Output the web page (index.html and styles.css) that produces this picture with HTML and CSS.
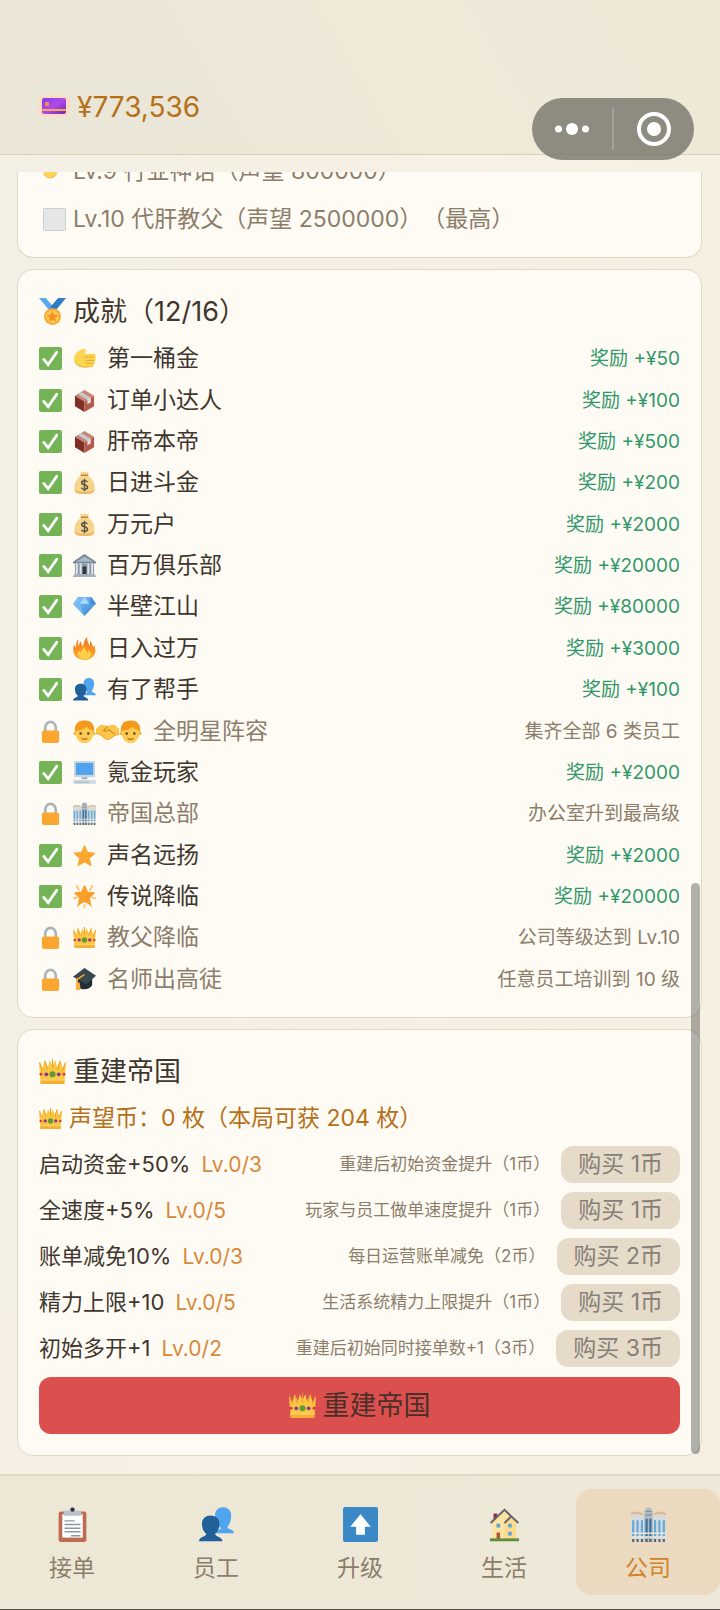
FILE: index.html
```html
<!DOCTYPE html>
<html lang="zh-CN">
<head>
    <meta charset="UTF-8">
    <meta name="viewport" content="width=device-width, initial-scale=1">
    <title>公司</title>
    <link rel="stylesheet" href="styles.css">
</head>
<body>

<!-- 图标 -->
<svg class="sprite" aria-hidden="true">
    <defs>
        <linearGradient id="g-card" x1="0" y1="0" x2="1" y2="1">
            <stop offset="0" stop-color="#7b3fe4"/>
            <stop offset=".5" stop-color="#b14be8"/>
            <stop offset="1" stop-color="#6a2bb5"/>
        </linearGradient>
        <linearGradient id="g-gem" x1="0" y1="0" x2="1" y2="1">
            <stop offset="0" stop-color="#8fcbfa"/>
            <stop offset="1" stop-color="#2f7fd0"/>
        </linearGradient>
        <linearGradient id="g-fire" x1="0" y1="0" x2="0" y2="1">
            <stop offset="0" stop-color="#f2711c"/>
            <stop offset="1" stop-color="#fdb12f"/>
        </linearGradient>
    </defs>
    <symbol id="i-card" viewBox="0 0 32 24">
        <rect x="0" y="0" width="32" height="22" rx="6" fill="#fbdcc4"/>
        <rect x="4" y="3" width="24" height="16" rx="2" fill="url(#g-card)"/>
        <rect x="4" y="14" width="24" height="2" fill="#f9a74e"/>
        <rect x="7" y="7" width="4" height="4" rx="1" fill="#f98a5a"/>
    </symbol>
    <symbol id="i-square" viewBox="0 0 24 24">
        <rect x="0.5" y="0.5" width="23" height="23" rx="1" fill="#e4e6e8" stroke="#c9cccf"/>
    </symbol>
    <symbol id="i-check" viewBox="0 0 24 24">
        <rect width="24" height="24" rx="2" fill="#74b457"/>
        <path d="M5 13l4.500 5.500L18.500 5.500" fill="none" stroke="#fff" stroke-width="3" stroke-linecap="round"/>
    </symbol>
    <symbol id="i-lock" viewBox="0 0 24 24">
        <path d="M6.500 13V8a5.500 6 0 0 1 11 0v5" fill="none" stroke="#a9b4bb" stroke-width="2.800"/>
        <rect x="3" y="11" width="18" height="13" rx="2" fill="#fba631"/>
    </symbol>
    <symbol id="i-medal" viewBox="0 0 24 24">
        <path d="M0 0h6l7 8-3 4z" fill="#5aa9ec"/>
        <path d="M24 0h-7l-7 8 4 4z" fill="#2f7cc4"/>
        <circle cx="12" cy="16.500" r="7.500" fill="#f9a632"/>
        <circle cx="12" cy="16.500" r="5.800" fill="#fcc755"/>
        <path d="M12 11.500l1.500 3.300 3.600.4-2.700 2.400.8 3.500-3.200-1.800-3.200 1.800.8-3.500-2.700-2.400 3.600-.4z" fill="#f59220"/>
    </symbol>
    <symbol id="i-hand" viewBox="0 0 24 24">
        <path d="M1 11C2 7 6 3 10 2c3-.5 4 1 3 3l-1 2h10a1.800 1.800 0 0 1 .6 3.500c1.600.6 1.500 3 0 3.500 1 1 .5 2.900-.8 3.100.4 1.500-.4 2.700-2 2.900-3 .6-7 1.500-11 .8C4 20 .5 16.500 1 11z" fill="#fcd553"/>
        <path d="M12 10.500h10.500M13 14h9.500M13 17h8.500" stroke="#e3a72f" fill="none"/>
        <path d="M2 15c1 3 4 5.500 8 5.800 4 .4 8-.2 11-.9" stroke="#e9ab37" fill="none"/>
    </symbol>
    <symbol id="i-fist" viewBox="0 0 24 24">
        <circle cx="7.500" cy="14" r="7.500" fill="#fcd553"/>
        <path d="M1 18c3 5 10 5 13 0" stroke="#e9ab37" fill="none"/>
    </symbol>
    <symbol id="i-box" viewBox="0 0 24 24">
        <path d="M2 7l10-6 10 6-10 6z" fill="#c98672"/>
        <path d="M2 7l10 6v11L2 18z" fill="#7e2f26"/>
        <path d="M22 7l-10 6v11l10-6z" fill="#b45a48"/>
        <path d="M5 5l3-2 10.500 6.500v4.500L15 16v-5z" fill="#dcdfe2"/>
        <path d="M5 5l10 6 3.500-1.500L8 3z" fill="#c4cacf"/>
    </symbol>
    <symbol id="i-bag" viewBox="0 0 24 24">
        <path d="M7.500 0l2.500 1.500L12 .5l2 1L16.500 0 15.500 5c6 4 7.500 9 7 14-.3 4-3 5-10.500 5S1.800 23 1.500 19C1 14 2.500 9 8.500 5z" fill="#f7d48c"/>
        <path d="M8 4.500h8" stroke="#b98446" stroke-width="1.500"/>
        <path d="M15 11.500c-1-2-6-2-6 .7 0 3 6.200 1.600 6.200 4.700 0 2.900-5.500 2.800-6.500.5M12 8v13" fill="none" stroke="#55503f" stroke-width="1.500"/>
        <path d="M1.500 19c.3 4 3 5 10.500 5s10.200-1 10.500-5c-2 3.500-19 3.500-21 0z" fill="#ecb863"/>
    </symbol>
    <symbol id="i-bank" viewBox="0 0 24 24">
        <path d="M12 0l12 8v2H0V8z" fill="#76889a"/>
        <path d="M12 2.500L21 8H3z" fill="#a9b8c5"/>
        <path d="M2 10h20v12H2z" fill="#8a98a6"/>
        <path d="M4 10v11M8 10v11M16 10v11M20 10v11" stroke="#dfe5ea" stroke-width="2"/>
        <path d="M10 13h4v8h-4z" fill="#2f3a45"/>
        <path d="M1 21h22v1.500h1V24H0v-1.500h1z" fill="#a5b0ba"/>
    </symbol>
    <symbol id="i-gem" viewBox="0 0 24 24">
        <path d="M5 2h14l5 7-12 13L0 9z" fill="url(#g-gem)"/>
        <path d="M0 9h7l5 13zM5 2l2 7 5-7z" fill="#77baf3"/>
        <path d="M17 9h7l-5-7z" fill="#3e8edd"/>
        <path d="M7 9h10l-5-7z" fill="#a9d8fc"/>
    </symbol>
    <symbol id="i-fire" viewBox="0 0 24 24">
        <path d="M5 2c1 3-.5 5 1 7 1-1 .5-3 1.500-4.500C9 6 9 8 10 10c2-3 1-7 5-10-1 4 1.500 6 2 9 1-1 1-3 .5-5C20 6 20 8 21 11c.5-1 1-2 1-3 3 7 1.500 15-10 16C0 23-1 15 1 8c1 1 1 2 2 3 0-4 1-6 2-9z" fill="url(#g-fire)"/>
        <path d="M5 18c0-2 1-3.500 2-4 0 1.500.5 2 1.500 2.500 0-3 2-4 3.500-6 .3 3 2 4 3 6 1-.6 1.200-1.600 1-3 2 1.500 3 3 3 5-1 6-13 6-14-.5z" fill="#fdcf4b"/>
    </symbol>
    <symbol id="i-people" viewBox="0 0 24 24">
        <path d="M11.500 18c0-2 3-2.500 3.500-3.500C12 11.500 10.500 9 11 5c.5-6.500 10.500-6.500 11 0 .2 4-.8 6.500-2.500 8.500 0 2 4.500 1.500 4.500 4.500z" fill="#4fa6ee"/>
        <path d="M0 23.500c0-3 4.500-3 5-5C3 17 2 14.500 2 11.500c0-7.500 12-7.500 12 0 0 3-1 5.500-3 7 .5 2 5 2 5 5z" fill="#22609a"/>
    </symbol>
    <symbol id="i-face" viewBox="0 0 24 24">
        <path d="M2 12C1 4 6 0 12 .5 19 0 23 5 22 12v3H2z" fill="#f39a1e"/>
        <circle cx="2.500" cy="14" r="2" fill="#f7b944"/>
        <circle cx="21.500" cy="14" r="2" fill="#f7b944"/>
        <path d="M3 11c4 0 8-1 11-4 2 2 4 3 7 4v4c-.5 5-4 9-9 9s-8.500-4-9-9z" fill="#fccb53"/>
        <circle cx="8" cy="14" r="1.300" fill="#5d4023"/>
        <circle cx="16" cy="14" r="1.300" fill="#5d4023"/>
        <path d="M9 19c2 1.500 4 1.500 6 0" fill="none" stroke="#b66a1c" stroke-width="1.200"/>
    </symbol>
    <symbol id="i-shake" viewBox="0 0 24 24">
        <path d="M0 9l5-4 7 1 7-1 5 4v6l-4 1-6 4c-2 1-4 0-5-1l-5-4-4-1z" fill="#fcc548"/>
        <path d="M12 7L8 11c2 1.500 4 .5 5.500-1l6 5" fill="none" stroke="#d48a22" stroke-width="1.200"/>
        <path d="M0 14l4 1 5 4c2 1.500 4 1.500 5 1l6-4 4-1" fill="none" stroke="#eda42d"/>
    </symbol>
    <symbol id="i-pc" viewBox="0 0 24 24">
        <rect x="1" y="0" width="22" height="17" rx="1" fill="#c9d6df"/>
        <rect x="3" y="2" width="18" height="12.500" fill="#4fa3ee"/>
        <path d="M9 17h6v2H9z" fill="#9dacb6"/>
        <rect x="0" y="19.500" width="24" height="4.500" rx="1" fill="#d3dde4"/>
        <path d="M2 22h15" stroke="#9dacb6"/>
    </symbol>
    <symbol id="i-tower" viewBox="0 0 24 24">
        <path d="M0 5c2-1 5-1 8 0h8c3-1 6-1 8 0v19H0z" fill="#d8dbd9"/>
        <path d="M0 5c2-1.500 5-1.500 8 0M16 5c3-1.500 6-1.500 8 0" fill="none" stroke="#e0b58f" stroke-width="1.500"/>
        <path d="M9 24V3l1.500-2.500h3L15 3v21z" fill="#b3bcc2"/>
        <path d="M10 3h4M10 5.500h4" stroke="#87939b"/>
        <path d="M1.500 9v11M4.500 9v11M7.500 9v11M16.500 9v11M19.500 9v11M22.500 9v11" stroke="#5fa9dc" stroke-width="1.500"/>
        <path d="M10.700 8v12M13.300 8v12" stroke="#346f9f" stroke-width="1.500"/>
        <path d="M0 18h24M0 20.500h24" stroke="#e5e3dc"/>
        <path d="M1.500 22v2M4.500 22v2M7.500 22v2M10.700 22v2M13.300 22v2M16.500 22v2M19.500 22v2M22.500 22v2" stroke="#5a646b" stroke-width="1.500"/>
    </symbol>
    <symbol id="i-star" viewBox="0 0 24 24">
        <path d="M12 1.500l3.200 7.300 7.800.8-5.900 5.300 1.700 7.800L12 18.700l-6.800 4 1.700-7.800L1 9.600l7.800-.8z" fill="#fba631" stroke="#fba631" stroke-linejoin="round"/>
    </symbol>
    <symbol id="i-glow" viewBox="0 0 24 24">
        <path d="M4 1l2 4M20 1l-2 4M0 14l4-1M24 14l-4-1M5 22l2-3M19 22l-2-3M12 20.500V24" stroke="#fcc873" stroke-width="2" stroke-linecap="round"/>
        <path d="M12 1l3 6.500 7 .8-5.200 4.900 1.400 7L12 16.700l-6.200 3.500 1.400-7L2 8.300l7-.8z" fill="#fb9f2b" stroke="#fb9f2b" stroke-width="1.500" stroke-linejoin="round"/>
    </symbol>
    <symbol id="i-crown" viewBox="0 0 24 24">
        <path d="M1.500 23L0 4l3 5L5 2l3 6 1.500-6L12 7l2.500-5L16 8l3-6 2 7 3-5-1.500 19z" fill="#fdc63f"/>
        <path d="M.5 4l2.500 7M5 2.500L7.500 10M12 1v8M19 2.500L16.500 10M23.500 4L21 11" stroke="#e9a03a" fill="none"/>
        <path d="M1.300 19h21.400l-.2 4h-21z" fill="#f6ae37"/>
        <path d="M1.300 19.500h21.400" stroke="#fbdc77"/>
        <circle cx="12" cy="14.500" r="2.700" fill="#5f9a36"/>
        <circle cx="6.500" cy="14.500" r="1.700" fill="#8637a0"/>
        <circle cx="17.500" cy="14.500" r="1.700" fill="#8637a0"/>
        <circle cx="1.800" cy="14.500" r="1.300" fill="#d83a45"/>
        <circle cx="22.200" cy="14.500" r="1.300" fill="#d83a45"/>
    </symbol>
    <symbol id="i-cap" viewBox="0 0 24 24">
        <path d="M5 10l7 5 8-5v8c-3 5-11 6-15 1z" fill="#232f36"/>
        <path d="M0 9L12 0l12 8-10 9z" fill="#39474f"/>
        <path d="M12 7L4 12l1 9" fill="none" stroke="#f4a431" stroke-width="1.600"/>
        <path d="M3 15h4l1 8H3z" fill="#f7b043"/>
    </symbol>
    <symbol id="i-clip" viewBox="0 0 24 24">
        <rect x="2.500" y="3" width="19" height="21" rx="1.500" fill="#bd6b52"/>
        <path d="M5 5h14v16H5z" fill="#fff"/>
        <path d="M6 6V2.500h4c0-3 4-3 4 0h4V6z" fill="#b9c2c8"/>
        <circle cx="12" cy="1.800" r="1.400" fill="#2c3237"/>
        <path d="M6.500 9.500h7M6.500 12h11M6.500 14.500h11M6.500 17h11M11 19.700h6.500" stroke="#8b9ba6"/>
    </symbol>
    <symbol id="i-up" viewBox="0 0 24 24">
        <rect width="24" height="24" rx="1.500" fill="#3b88c6"/>
        <path d="M12 5l7 8.500h-4V19H9v-5.500H5z" fill="#fff"/>
    </symbol>
    <symbol id="i-house" viewBox="0 0 24 24">
        <path d="M4.500 4.500H7V9H4.500z" fill="#8b2f3c"/>
        <path d="M3.500 10.500l8.500-8 8 8V22h-16.500z" fill="#fbe3a3"/>
        <path d="M12 11l5-4 3 4V22h-8z" fill="#fbdc8c"/>
        <path d="M2.500 11L12 2l9.500 9M12 11l4.500-4.500" fill="none" stroke="#66626b" stroke-width="1.300"/>
        <path d="M6.500 11.500H9V14H6.500zM14.500 11.500H17V14h-2.500zM14.500 17H17v2.500h-2.500z" fill="#5aa4de"/>
        <path d="M6.500 17.500H9V22H6.500z" fill="#b5553d"/>
        <path d="M2 21.500h20v2H2z" fill="#5f8f3a"/>
    </symbol>
</svg>

<header class="top">
    <div class="money">
        <svg class="card-icon"><use href="#i-card"/></svg>
        <span>¥773,536</span>
    </div>
    <div class="capsule">
        <button class="capsule-btn" aria-label="更多">
            <svg class="dots" viewBox="0 0 34 12">
                <circle cx="3.500" cy="6" r="3.500" fill="#fff"/>
                <circle cx="17" cy="6" r="6" fill="#fff"/>
                <circle cx="30.500" cy="6" r="3.500" fill="#fff"/>
            </svg>
        </button>
        <button class="capsule-btn" aria-label="关闭">
            <svg class="ring" viewBox="0 0 34 34">
                <circle cx="17" cy="17" r="15" fill="none" stroke="#fff" stroke-width="4"/>
                <circle cx="17" cy="17" r="7" fill="#fff"/>
            </svg>
        </button>
    </div>
</header>

<main class="content">
    <!-- 公司等级（滚动后只剩底部） -->
    <section class="card levels">
        <div class="level cut"><svg class="icon"><use href="#i-fist"/></svg><span>Lv.9 行业神话（声望 800000）</span></div>
        <div class="level"><svg class="icon"><use href="#i-square"/></svg><span>Lv.10 代肝教父（声望 2500000）（最高）</span></div>
    </section>

    <!-- 成就 -->
    <section class="card achievements">
        <h2 class="title"><svg class="icon"><use href="#i-medal"/></svg>成就（12/16）</h2>
        <ul class="list">
            <li class="row done"><svg class="icon"><use href="#i-check"/></svg><span class="pics"><svg class="icon"><use href="#i-hand"/></svg></span><span class="name">第一桶金</span><span class="tip">奖励 +¥50</span></li>
            <li class="row done"><svg class="icon"><use href="#i-check"/></svg><span class="pics"><svg class="icon"><use href="#i-box"/></svg></span><span class="name">订单小达人</span><span class="tip">奖励 +¥100</span></li>
            <li class="row done"><svg class="icon"><use href="#i-check"/></svg><span class="pics"><svg class="icon"><use href="#i-box"/></svg></span><span class="name">肝帝本帝</span><span class="tip">奖励 +¥500</span></li>
            <li class="row done"><svg class="icon"><use href="#i-check"/></svg><span class="pics"><svg class="icon"><use href="#i-bag"/></svg></span><span class="name">日进斗金</span><span class="tip">奖励 +¥200</span></li>
            <li class="row done"><svg class="icon"><use href="#i-check"/></svg><span class="pics"><svg class="icon"><use href="#i-bag"/></svg></span><span class="name">万元户</span><span class="tip">奖励 +¥2000</span></li>
            <li class="row done"><svg class="icon"><use href="#i-check"/></svg><span class="pics"><svg class="icon"><use href="#i-bank"/></svg></span><span class="name">百万俱乐部</span><span class="tip">奖励 +¥20000</span></li>
            <li class="row done"><svg class="icon"><use href="#i-check"/></svg><span class="pics"><svg class="icon"><use href="#i-gem"/></svg></span><span class="name">半壁江山</span><span class="tip">奖励 +¥80000</span></li>
            <li class="row done"><svg class="icon"><use href="#i-check"/></svg><span class="pics"><svg class="icon"><use href="#i-fire"/></svg></span><span class="name">日入过万</span><span class="tip">奖励 +¥3000</span></li>
            <li class="row done"><svg class="icon"><use href="#i-check"/></svg><span class="pics"><svg class="icon"><use href="#i-people"/></svg></span><span class="name">有了帮手</span><span class="tip">奖励 +¥100</span></li>
            <li class="row"><svg class="icon"><use href="#i-lock"/></svg><span class="pics"><svg class="icon"><use href="#i-face"/></svg><svg class="icon"><use href="#i-shake"/></svg><svg class="icon"><use href="#i-face"/></svg></span><span class="name">全明星阵容</span><span class="tip">集齐全部 6 类员工</span></li>
            <li class="row done"><svg class="icon"><use href="#i-check"/></svg><span class="pics"><svg class="icon"><use href="#i-pc"/></svg></span><span class="name">氪金玩家</span><span class="tip">奖励 +¥2000</span></li>
            <li class="row"><svg class="icon"><use href="#i-lock"/></svg><span class="pics"><svg class="icon"><use href="#i-tower"/></svg></span><span class="name">帝国总部</span><span class="tip">办公室升到最高级</span></li>
            <li class="row done"><svg class="icon"><use href="#i-check"/></svg><span class="pics"><svg class="icon"><use href="#i-star"/></svg></span><span class="name">声名远扬</span><span class="tip">奖励 +¥2000</span></li>
            <li class="row done"><svg class="icon"><use href="#i-check"/></svg><span class="pics"><svg class="icon"><use href="#i-glow"/></svg></span><span class="name">传说降临</span><span class="tip">奖励 +¥20000</span></li>
            <li class="row"><svg class="icon"><use href="#i-lock"/></svg><span class="pics"><svg class="icon"><use href="#i-crown"/></svg></span><span class="name">教父降临</span><span class="tip">公司等级达到 Lv.10</span></li>
            <li class="row"><svg class="icon"><use href="#i-lock"/></svg><span class="pics"><svg class="icon"><use href="#i-cap"/></svg></span><span class="name">名师出高徒</span><span class="tip">任意员工培训到 10 级</span></li>
        </ul>
    </section>

    <!-- 重建帝国 -->
    <section class="card">
        <h2 class="title"><svg class="icon"><use href="#i-crown"/></svg>重建帝国</h2>
        <p class="coins"><svg class="icon"><use href="#i-crown"/></svg>声望币：0 枚（本局可获 204 枚）</p>
        <ul class="shop">
            <li class="perk"><span class="name">启动资金+50%</span><span class="lv">Lv.0/3</span><span class="desc">重建后初始资金提升（1币）</span><button class="buy" disabled>购买 1币</button></li>
            <li class="perk"><span class="name">全速度+5%</span><span class="lv">Lv.0/5</span><span class="desc">玩家与员工做单速度提升（1币）</span><button class="buy" disabled>购买 1币</button></li>
            <li class="perk"><span class="name">账单减免10%</span><span class="lv">Lv.0/3</span><span class="desc">每日运营账单减免（2币）</span><button class="buy" disabled>购买 2币</button></li>
            <li class="perk"><span class="name">精力上限+10</span><span class="lv">Lv.0/5</span><span class="desc">生活系统精力上限提升（1币）</span><button class="buy" disabled>购买 1币</button></li>
            <li class="perk"><span class="name">初始多开+1</span><span class="lv">Lv.0/2</span><span class="desc">重建后初始同时接单数+1（3币）</span><button class="buy" disabled>购买 3币</button></li>
        </ul>
        <button class="rebuild"><svg class="icon"><use href="#i-crown"/></svg>重建帝国</button>
    </section>
    <div class="scrollbar"></div>
</main>

<nav class="tabs">
    <a class="tab" href="#"><svg class="icon"><use href="#i-clip"/></svg>接单</a>
    <a class="tab" href="#"><svg class="icon"><use href="#i-people"/></svg>员工</a>
    <a class="tab" href="#"><svg class="icon"><use href="#i-up"/></svg>升级</a>
    <a class="tab" href="#"><svg class="icon"><use href="#i-house"/></svg>生活</a>
    <a class="tab current" href="#"><svg class="icon"><use href="#i-tower"/></svg>公司</a>
</nav>

</body>
</html>
```
FILE: styles.css
```css
* {
    box-sizing: border-box;
}

body, ul, li, h2, p {
    margin: 0;
    padding: 0;
    list-style: none;
    font-weight: normal;
}

body {
    display: flex;
    flex-direction: column;
    min-height: 100vh;
    font-family: Inter, "Noto Sans CJK SC", sans-serif;
    font-size: 23px;
    line-height: 41px;
    text-spacing-trim: space-all;
    color: #3f362e;
    background: linear-gradient(100deg, #f3efe4, #f7f0e4 50%, #f4efe1);
}

button {
    font: inherit;
    border: none;
    padding: 0;
}

.sprite {
    position: absolute;
    width: 0;
    height: 0;
}

.icon {
    flex: none;
    width: 23px;
    height: 23px;
}

/* 顶部 */
.top {
    position: relative;
    padding: 82px 24px 22px;
    border-bottom: 1px solid #d9d0b9;
    background: linear-gradient(60deg, #ebe5d5, #eee7d7 48%, #f1ead8 52%, #ede8d8 75%, #efe8d6);
}

.money {
    display: inline-flex;
    align-items: center;
    gap: 7px;
    height: 50px;
    padding: 0 8px 0 14px;
    border-radius: 14px;
    background: rgba(234, 232, 218, 0.5);
    font-size: 28px;
    color: #b57019;
    vertical-align: top;
}

.card-icon {
    width: 32px;
    height: 24px;
}

/* 小程序胶囊按钮 */
.capsule {
    position: absolute;
    z-index: 2;
    top: 98px;
    right: 26px;
    display: flex;
    align-items: center;
    width: 162px;
    height: 62px;
    border-radius: 31px;
    background: rgba(108, 106, 98, 0.74);
}

.capsule-btn {
    flex: 1;
    display: flex;
    align-items: center;
    justify-content: center;
    height: 42px;
    background: none;
}

.capsule-btn + .capsule-btn {
    border-left: 2px solid #a5a299;
}

.dots {
    width: 34px;
    height: 12px;
}

.ring {
    width: 34px;
    height: 34px;
}

/* 内容 */
.content {
    position: relative;
    flex: 1;
    display: flex;
    flex-direction: column;
    gap: 11px;
    padding: 17px 18px 18px 17px;
}

.card {
    padding: 21px;
    border: 1px solid #e0d8c3;
    border-radius: 16px;
    background: #fefbf4;
}

.levels {
    padding-top: 0;
    padding-bottom: 17px;
    border-top: none;
    border-radius: 0 0 16px 16px;
    color: #8c7d6b;
}

.level {
    display: flex;
    align-items: center;
    gap: 7px;
    padding-left: 4px;
}

.level.cut {
    align-items: flex-end;
    height: 20px;
    margin-bottom: 7px;
    overflow: hidden;
}

.level.cut .icon {
    margin-bottom: 12px;
}

.title {
    display: flex;
    align-items: center;
    gap: 7px;
    font-size: 27px;
}

.title .icon,
.rebuild .icon {
    width: 27px;
    height: 27px;
}

.achievements {
    flex: 1;
    display: flex;
    flex-direction: column;
    gap: 6px;
    padding-bottom: 17px;
}

.list {
    flex: 1;
    display: grid;
    grid-auto-rows: minmax(41px, 1fr);
}

.row {
    display: flex;
    align-items: center;
    gap: 11px;
    color: #8c7d6b;
}

.row.done .name {
    color: #3f362e;
}

.pics {
    display: flex;
}

.tip {
    margin-left: auto;
    font-size: 19px;
}

.row.done .tip {
    color: #32986b;
}

/* 重建 */
.coins {
    display: flex;
    align-items: center;
    gap: 7px;
    margin-top: 6px;
    color: #b57019;
}

.shop {
    display: flex;
    flex-direction: column;
    gap: 9px;
    margin: 7px 0 10px;
}

.perk {
    display: flex;
    align-items: center;
    line-height: 37px;
    white-space: nowrap;
}

.perk .name {
    font-size: 22px;
}

.lv {
    margin-left: 11px;
    font-size: 21px;
    color: #d8883a;
}

.desc {
    margin-left: auto;
    font-size: 17px;
    color: #8c7d6b;
}

.buy {
    margin-left: 11px;
    padding: 0 17px;
    border-radius: 12px;
    background: #e5dbc8;
    color: #868078;
}

.rebuild {
    display: flex;
    align-items: center;
    justify-content: center;
    gap: 7px;
    width: 100%;
    height: 57px;
    border-radius: 12px;
    background: #db4f4f;
    font-size: 27px;
    color: #4a2f28;
}

.scrollbar {
    position: absolute;
    right: 20px;
    bottom: 20px;
    width: 9px;
    height: 571px;
    border-radius: 5px;
    background: rgba(0, 0, 0, 0.3);
}

/* 底部导航 */
.tabs {
    display: flex;
    padding: 13px 0 14px;
    border-top: 2px solid #e1dac5;
    border-bottom: 1px solid #55534c;
    background: linear-gradient(90deg, #ede7d6, #eee8d8);
}

.tab {
    flex: 1;
    display: flex;
    flex-direction: column;
    align-items: center;
    gap: 11px;
    padding: 18px 0 12px;
    border-radius: 16px;
    line-height: 30px;
    color: #8c7d6b;
    text-decoration: none;
}

.tab .icon {
    width: 35px;
    height: 35px;
}

.tab.current {
    background: #ebdac0;
    color: #d08228;
}
```
